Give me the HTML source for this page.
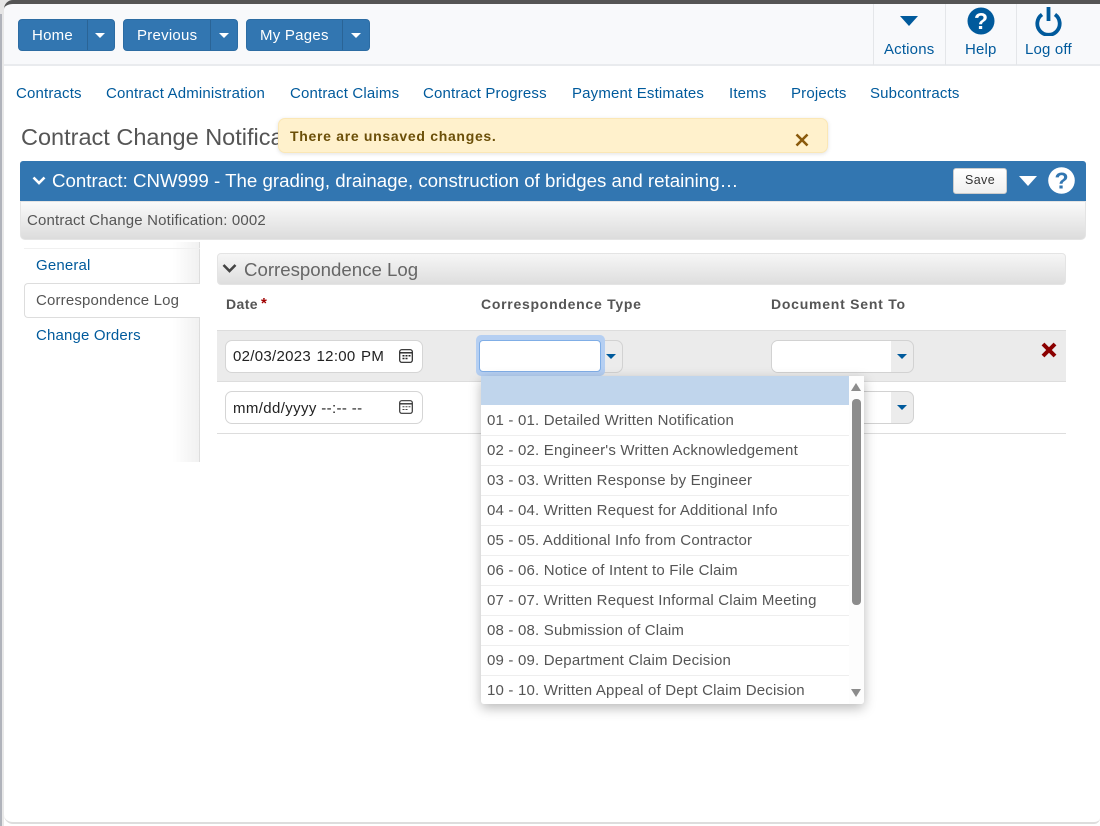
<!DOCTYPE html>
<html><head><meta charset="utf-8"><style>
*{box-sizing:border-box}
html,body{margin:0;padding:0;width:1100px;height:826px;overflow:hidden;background:#fff;font-family:"Liberation Sans",Arial,sans-serif}
.a{position:absolute;white-space:nowrap}
.lnk{color:#005a9c;font-size:15px;line-height:18px;letter-spacing:.17px}
.btn{background:#3276b1;border-radius:4px;height:32px;top:19px;color:#fff;font-size:15px;line-height:31px;border:1px solid #2c6ca3;letter-spacing:.25px}
.sep{position:absolute;top:0;bottom:0;width:1px;background:#2a6496}
.car{position:absolute;width:0;height:0;border-left:5px solid transparent;border-right:5px solid transparent;border-top:5px solid #fff}
.dd{position:absolute;left:0;width:368px;height:30px;border-bottom:1px solid #eee;font-size:15px;color:#555;padding-left:6px;line-height:29px;white-space:nowrap;letter-spacing:.19px}
.inp{background:#fff;border:1px solid #d5d5d5;border-radius:7px}
.sel{background:#ececec;border:1px solid #d2d2d2;border-radius:7px;overflow:hidden}
</style></head><body>
<div class="a" style="left:0;top:0;width:1100px;height:826px;background:#fff"></div>
<div class="a" style="left:0;top:0;width:2px;height:826px;background:#b0b3bb"></div>
<div class="a" style="left:2px;top:0;width:2px;height:826px;background:#e8e8e8"></div>
<div class="a" style="left:0;top:0;width:1100px;height:4px;background:#555"></div>
<div class="a" style="left:0;top:0;width:14px;height:14px;background:#e6e6e6"></div>
<div class="a" style="left:4px;top:0;width:1096px;height:66px;background:#f8f9fb;border-bottom:2px solid #e9ebee;border-top:4px solid #555;border-top-left-radius:9px"></div>
<div class="a" style="left:4px;top:66px;width:1096px;height:758px;background:#fff;border-bottom:2px solid #ddd;border-bottom-left-radius:9px;border-bottom-right-radius:6px"></div>

<div class="a btn" style="left:18px;width:97px"><span class="a" style="left:13px;top:0">Home</span><div class="sep" style="left:68px"></div><div class="car" style="left:76px;top:13px"></div></div>
<div class="a btn" style="left:123px;width:115px"><span class="a" style="left:13px;top:0">Previous</span><div class="sep" style="left:86px"></div><div class="car" style="left:95px;top:13px"></div></div>
<div class="a btn" style="left:246px;width:124px"><span class="a" style="left:13px;top:0">My Pages</span><div class="sep" style="left:95px"></div><div class="car" style="left:104px;top:13px"></div></div>

<div class="a" style="left:873px;top:4px;width:1px;height:61px;background:#e4e6e9"></div>
<div class="a" style="left:945px;top:4px;width:1px;height:61px;background:#e4e6e9"></div>
<div class="a" style="left:1016px;top:4px;width:1px;height:61px;background:#e4e6e9"></div>
<div class="a" style="left:900px;top:16px;width:0;height:0;border-left:9px solid transparent;border-right:9px solid transparent;border-top:10px solid #005a9c"></div>
<svg class="a" style="left:967px;top:7px" width="28" height="28" viewBox="0 0 28 28"><circle cx="14" cy="14" r="13.5" fill="#005a9c"/><text x="14" y="22" font-family="Liberation Sans" font-weight="bold" font-size="23" fill="#fff" text-anchor="middle">?</text></svg>
<svg class="a" style="left:1033px;top:5px" width="31" height="31" viewBox="0 0 31 31"><path d="M9 9.5A11.2 11.2 0 1 0 22 9.5" fill="none" stroke="#005a9c" stroke-width="3.8"/><path d="M15.5 2V16" stroke="#005a9c" stroke-width="3.8" fill="none"/></svg>
<span class="a lnk" style="left:884px;top:41px">Actions</span>
<span class="a lnk" style="left:965px;top:41px">Help</span>
<span class="a lnk" style="left:1025px;top:41px">Log off</span>

<span class="a lnk" style="left:16px;top:85px">Contracts</span>
<span class="a lnk" style="left:106px;top:85px">Contract Administration</span>
<span class="a lnk" style="left:290px;top:85px">Contract Claims</span>
<span class="a lnk" style="left:423px;top:85px">Contract Progress</span>
<span class="a lnk" style="left:572px;top:85px">Payment Estimates</span>
<span class="a lnk" style="left:729px;top:85px">Items</span>
<span class="a lnk" style="left:791px;top:85px">Projects</span>
<span class="a lnk" style="left:870px;top:85px">Subcontracts</span>

<span class="a" style="left:21px;top:123px;font-size:23.5px;line-height:28px;color:#555">Contract Change Notification</span>
<div class="a" style="left:278px;top:118px;width:550px;height:35px;background:#fff1cc;border:1px solid #fbe7b5;border-radius:7px;box-shadow:0 1px 4px rgba(0,0,0,.12)"></div>
<span class="a" style="left:290px;top:127px;font-size:14px;line-height:18px;font-weight:bold;color:#6b4f08;letter-spacing:.7px">There are unsaved changes.</span>
<svg class="a" style="left:795px;top:133px" width="14" height="14" viewBox="0 0 14 14"><path d="M1.5 1.5L12.5 12.5M12.5 1.5L1.5 12.5" stroke="#8a5a0c" stroke-width="2.6" fill="none"/></svg>

<div class="a" style="left:20px;top:201px;width:1066px;height:39px;background:linear-gradient(#fafafa,#dcdcdc);border:1px solid #e4e4e4;border-radius:0 0 5px 5px"></div>
<div class="a" style="left:20px;top:161px;width:1066px;height:40px;background:#3276b1;border-radius:3px 3px 0 0"></div>
<svg class="a" style="left:32px;top:175px" width="14" height="11" viewBox="0 0 14 11"><path d="M1.5 2.5L7 8L12.5 2.5" stroke="#fff" stroke-width="2.6" fill="none"/></svg>
<span class="a" style="left:52px;top:169px;font-size:18.7px;line-height:23px;color:#fff">Contract: CNW999 - The grading, drainage, construction of bridges and retaining…</span>
<div class="a" style="left:953px;top:168px;width:54px;height:26px;background:linear-gradient(#fff,#efefef);border:1px solid #ccc;border-radius:3px;color:#333;font-size:12.5px;line-height:23px;text-align:center;letter-spacing:.4px">Save</div>
<div class="a" style="left:1019px;top:176px;width:0;height:0;border-left:9px solid transparent;border-right:9px solid transparent;border-top:10px solid #fff"></div>
<svg class="a" style="left:1048px;top:167px" width="27" height="27" viewBox="0 0 27 27"><circle cx="13.5" cy="13.5" r="13.3" fill="#fff"/><text x="13.5" y="21.5" font-family="Liberation Sans" font-weight="bold" font-size="23" fill="#3276b1" text-anchor="middle">?</text></svg>
<span class="a" style="left:27px;top:212px;font-size:15px;line-height:18px;color:#555;letter-spacing:.16px">Contract Change Notification: 0002</span>

<div class="a" style="left:24px;top:242px;width:176px;height:220px;background:linear-gradient(90deg,#fff 85%,#f1f1f1);border-right:1px solid #ddd"></div>
<div class="a" style="left:24px;top:248px;width:176px;height:1px;background:#f0f0f0"></div>
<div class="a" style="left:24px;top:283px;width:176px;height:35px;background:#fff;border:1px solid #ddd;border-right:none;border-radius:4px 0 0 4px"></div>
<span class="a lnk" style="left:36px;top:257px">General</span>
<span class="a" style="left:36px;top:292px;font-size:15px;line-height:18px;color:#555;letter-spacing:.17px">Correspondence Log</span>
<span class="a lnk" style="left:36px;top:327px">Change Orders</span>

<div class="a" style="left:217px;top:253px;width:849px;height:32px;background:linear-gradient(#f6f6f6,#dedede);border:1px solid #e4e4e4;border-radius:4px"></div>
<svg class="a" style="left:222px;top:263px" width="15" height="11" viewBox="0 0 15 11"><path d="M1.5 2L7.5 8L13.5 2" stroke="#444" stroke-width="2.6" fill="none"/></svg>
<span class="a" style="left:244px;top:258px;font-size:18.65px;line-height:23px;color:#666">Correspondence Log</span>

<span class="a" style="left:226px;top:295px;font-size:14px;line-height:18px;font-weight:bold;color:#555;letter-spacing:.4px">Date</span>
<span class="a" style="left:261px;top:295px;font-size:15px;line-height:18px;font-weight:bold;color:#a00000">*</span>
<span class="a" style="left:481px;top:295px;font-size:14px;line-height:18px;font-weight:bold;color:#555;letter-spacing:.73px">Correspondence Type</span>
<span class="a" style="left:771px;top:295px;font-size:14px;line-height:18px;font-weight:bold;color:#555;letter-spacing:.76px">Document Sent To</span>

<div class="a" style="left:217px;top:330px;width:849px;height:52px;background:#ebebeb;border-top:1px solid #ddd;border-bottom:1px solid #ddd"></div>
<div class="a" style="left:217px;top:433px;width:849px;height:1px;background:#ddd"></div>

<div class="a inp" style="left:225px;top:340px;width:198px;height:33px"></div>
<span class="a" style="left:233px;top:348px;font-size:15px;line-height:18px;color:#222;letter-spacing:.3px;word-spacing:1px">02/03/2023 12:00 PM</span>
<svg class="a" style="left:399px;top:349px" width="14" height="14" viewBox="0 0 14 14"><rect x=".7" y=".7" width="12.6" height="12.6" rx="2" fill="#fff" stroke="#222" stroke-width="1.2"/><path d="M1 3.8H13" stroke="#222" stroke-width="1.4"/><path d="M3.5 6.7h2M6.5 6.7h2M9.5 6.7h2M3.5 9.5h2M6.5 9.5h2" stroke="#222" stroke-width="1.5"/></svg>
<div class="a inp" style="left:225px;top:391px;width:198px;height:33px"></div>
<span class="a" style="left:233px;top:400px;font-size:15px;line-height:18px;color:#222;letter-spacing:.37px">mm/dd/yyyy --:-- --</span>
<svg class="a" style="left:399px;top:400px" width="14" height="14" viewBox="0 0 14 14"><rect x=".7" y=".7" width="12.6" height="12.6" rx="2" fill="#fff" stroke="#333" stroke-width="1.2"/><path d="M1 3.8H13" stroke="#333" stroke-width="1.4"/><path d="M3.5 6.7h2M6.5 6.7h2M9.5 6.7h2M3.5 9.5h2M6.5 9.5h2" stroke="#444" stroke-width="1"/></svg>

<div class="a sel" style="left:480px;top:340px;width:143px;height:33px"></div>
<div class="a" style="left:476px;top:335px;width:129px;height:41px;background:#b5cff2;border-radius:5px"></div>
<div class="a" style="left:479px;top:340px;width:122px;height:32px;background:#fff;border:1px solid #80aee6;border-radius:4px"></div>
<div class="a" style="left:606px;top:354px;width:0;height:0;border-left:5px solid transparent;border-right:5px solid transparent;border-top:5px solid #005a9c"></div>

<div class="a sel" style="left:771px;top:340px;width:143px;height:33px"><div style="width:119px;height:33px;background:#fff"></div></div>
<div class="a" style="left:897px;top:354px;width:0;height:0;border-left:5px solid transparent;border-right:5px solid transparent;border-top:5px solid #005a9c"></div>
<div class="a sel" style="left:771px;top:391px;width:143px;height:33px"><div style="width:119px;height:33px;background:#fff"></div></div>
<div class="a" style="left:897px;top:405px;width:0;height:0;border-left:5px solid transparent;border-right:5px solid transparent;border-top:5px solid #005a9c"></div>

<svg class="a" style="left:1041px;top:342px" width="16" height="16" viewBox="0 0 16 16"><path d="M2 2L14 14M14 2L2 14" stroke="#8b0000" stroke-width="4" fill="none"/></svg>

<div class="a" style="left:481px;top:376px;width:383px;height:328px;background:#fff;box-shadow:0 4px 12px rgba(0,0,0,.28);border-radius:0 0 3px 3px;overflow:hidden">
<div class="a" style="left:0;top:0;width:368px;height:29px;background:#c0d5ec"></div>
<div class="dd" style="top:30px">01 - 01. Detailed Written Notification</div>
<div class="dd" style="top:60px">02 - 02. Engineer's Written Acknowledgement</div>
<div class="dd" style="top:90px">03 - 03. Written Response by Engineer</div>
<div class="dd" style="top:120px">04 - 04. Written Request for Additional Info</div>
<div class="dd" style="top:150px">05 - 05. Additional Info from Contractor</div>
<div class="dd" style="top:180px">06 - 06. Notice of Intent to File Claim</div>
<div class="dd" style="top:210px">07 - 07. Written Request Informal Claim Meeting</div>
<div class="dd" style="top:240px">08 - 08. Submission of Claim</div>
<div class="dd" style="top:270px">09 - 09. Department Claim Decision</div>
<div class="dd" style="top:300px;border:none">10 - 10. Written Appeal of Dept Claim Decision</div>
<div class="a" style="left:368px;top:0;width:15px;height:328px;background:#fdfdfd"></div>
<div class="a" style="left:370px;top:7px;width:0;height:0;border-left:5px solid transparent;border-right:5px solid transparent;border-bottom:8px solid #8c8c8c"></div>
<div class="a" style="left:371px;top:23px;width:9px;height:206px;background:#8c8c8c;border-radius:4px"></div>
<div class="a" style="left:370px;top:313px;width:0;height:0;border-left:5px solid transparent;border-right:5px solid transparent;border-top:8px solid #8c8c8c"></div>
</div>
</body></html>
